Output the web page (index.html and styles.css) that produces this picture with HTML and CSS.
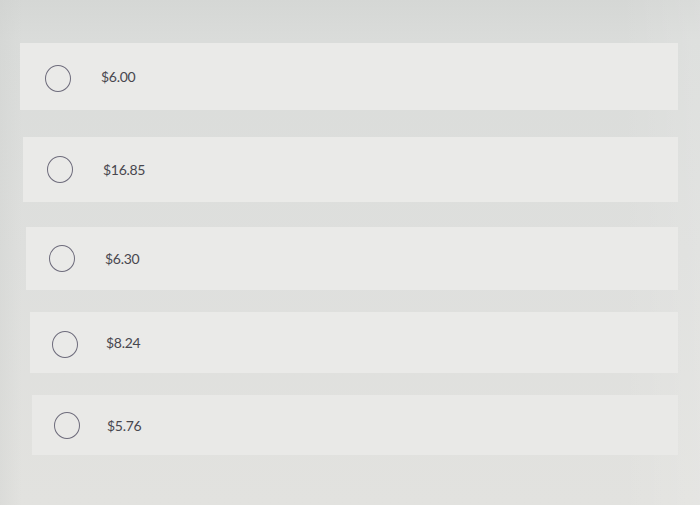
FILE: index.html
```html
<!DOCTYPE html>
<html lang="en">
<head>
<meta charset="utf-8">
<title>Choices</title>
<link rel="stylesheet" href="styles.css">
</head>
<body>
  <div class="page">
    <div class="choices">
      <label class="option r1"><span class="radio"></span><span class="label">$6.00</span></label>
      <label class="option r2"><span class="radio"></span><span class="label">$16.85</span></label>
      <label class="option r3"><span class="radio"></span><span class="label">$6.30</span></label>
      <label class="option r4"><span class="radio"></span><span class="label">$8.24</span></label>
      <label class="option r5"><span class="radio"></span><span class="label">$5.76</span></label>
    </div>
  </div>
</body>
</html>
```
FILE: styles.css
```css
html, body {
  margin: 0;
  padding: 0;
  height: 100%;
}

body {
  background: linear-gradient(180deg, #d5d7d5 0px, #dadcda 40px, #dedfdd 250px, #e2e2df 505px);
  font-family: Lato, "Open Sans", "Liberation Sans", sans-serif;
  overflow: hidden;
}

.page {
  height: 505px;
  background: linear-gradient(90deg, rgba(205,207,205,0.35) 0px, rgba(205,207,205,0) 22px, rgba(255,255,255,0) 620px, rgba(255,255,255,0.12) 700px);
}

.choices {
  display: flex;
  flex-direction: column;
  padding-top: 43px;
}

.option {
  display: flex;
  align-items: center;
  background: #eaeae8;
  margin-right: 22px;
}

.radio {
  flex: none;
  width: 24px;
  height: 25px;
  border: 1.6px solid #6e6c7c;
  border-radius: 50%;
}

.label {
  font-size: 14px;
  color: #48474e;
  letter-spacing: -0.3px;
}

.r1 { height: 67px; margin-left: 20px; padding-left: 25px; gap: 30px; }
.r2 { height: 65px; margin-left: 23px; padding-left: 24px; gap: 30px; margin-top: 27px; }
.r3 { height: 63px; margin-left: 26px; padding-left: 23px; gap: 30px; margin-top: 25px; }
.r4 { height: 61px; margin-left: 30px; padding-left: 22px; gap: 28px; margin-top: 22px; }
.r5 { height: 60px; margin-left: 32px; padding-left: 22px; gap: 27px; margin-top: 22px; background: #e9e9e7; }

.r1 .radio { margin-top: 3px; }
.r4 .radio { margin-top: 3px; }
```
